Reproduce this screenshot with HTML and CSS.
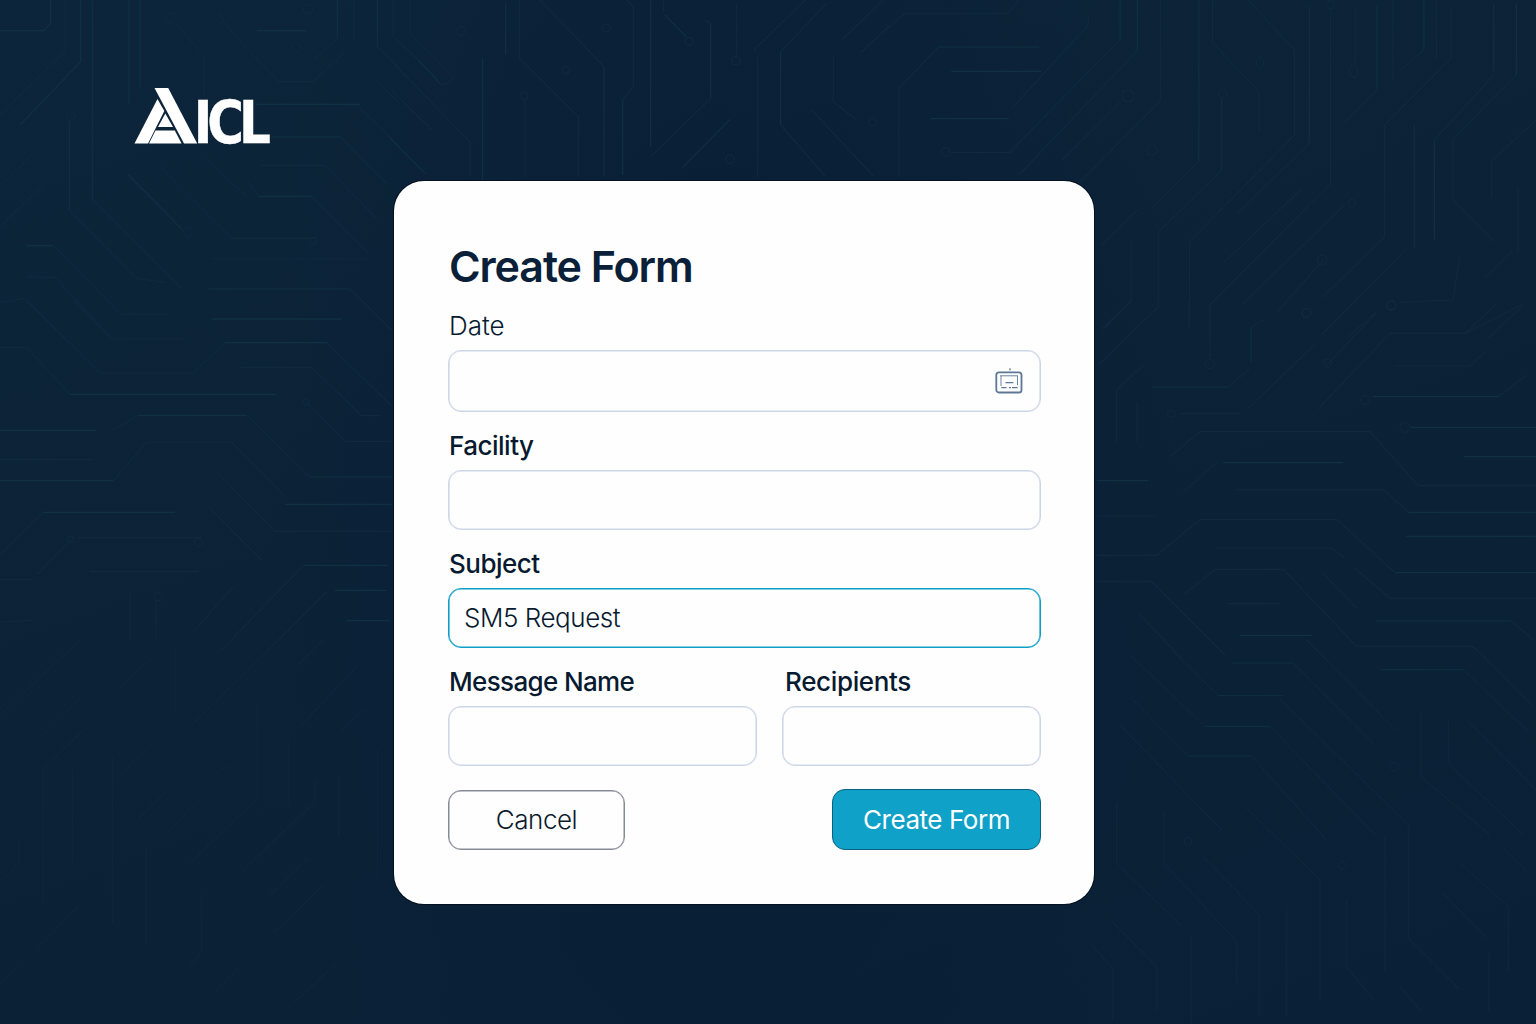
FILE: index.html
```html
<!DOCTYPE html>
<html lang="en">
<head>
<meta charset="utf-8">
<title>Create Form</title>
<link rel="stylesheet" href="styles.css">
</head>
<body>
<svg class="circuit" viewBox="0 0 1536 1024" aria-hidden="true">
  <g transform="scale(.33333)">
    <path class="teal" d="M0 92H132L152 70V0M242 0V185L60 375M277 0V598M387 0V310M420 0V262M208 362V630M770 92H920M1012 0V115M1132 0V140M770 313H1080M815 411H1022M385 525L550 692M775 589H935M80 737H160M625 867H1050M635 957H1025"/>
    <path d="M196 0V152L0 345M10 550L102 458M0 680L135 550M208 630L410 835L495 847M277 598L550 870M525 65L612 170V290M655 40L690 90L835 245H940L1035 155M940 180L1012 115M1062 0V120M1132 140L1200 205M1180 0V110M1080 325L1200 440M1022 411L1160 550M780 497H975L1130 655M480 500L695 715H950M610 470L740 590M740 540L775 589M935 589L1105 760M635 777H1105M160 737L362 942H500M80 830L165 832L330 1010M0 908L70 895L200 1020M1050 867L1175 990M1120 235L1200 310"/>
    <circle cx="212" cy="348" r="13"/><circle cx="564" cy="696" r="13"/><circle cx="924" cy="26" r="14"/><circle cx="890" cy="142" r="13"/><circle cx="940" cy="722" r="11"/><circle cx="510" cy="54" r="14"/>
  </g>
  <g transform="translate(390 0) scale(.33333)">
    <path class="teal" d="M347 10V165M278 175V540M642 200V530M698 300V525M782 0V440M962 70V295M1172 155V375M825 45L888 110M875 505L1020 358M0 415L105 520M85 180L150 250"/>
    <path d="M10 0V110L85 180M60 0V100L185 225Q195 250 150 255M0 180L240 425V530M0 265L125 390M388 0V175L565 350V530M405 298V530M450 0L642 200M710 0L730 22V260L698 300M820 0V40M945 62L962 70M962 295L782 470M1040 10V165M1245 0L1090 152M1310 10L1172 155M1103 170V530M1172 375L1305 528M1480 0L1355 120M1500 75L1410 160M1330 165V305L1400 360M1265 330L1450 528"/>
    <circle cx="403" cy="287" r="11"/><circle cx="528" cy="210" r="11"/><circle cx="898" cy="124" r="12"/><circle cx="1038" cy="182" r="13"/><circle cx="212" cy="94" r="14"/><circle cx="648" cy="84" r="12"/><circle cx="1020" cy="478" r="13"/><circle cx="1448" cy="366" r="12"/>
  </g>
  <g transform="translate(880 0) scale(.41837 .33333)">
    <path class="teal" d="M140 141H380M170 214H385M120 356H308M574 0V118M615 0V152M762 0V485M1026 20V430M1188 15V270M1300 0V150M1521 10V225M1277 375V745M1325 420V720M1467 10V215M817 295V510"/>
    <path d="M60 40H305L332 0M0 105L60 40M140 141L45 265V530M498 48V75L315 325M574 118L310 457H170M615 152L332 525M670 0V303L435 600M575 305L435 480M762 485L650 625M817 510L665 697V922L590 1010M795 0V128L906 275V400M880 0L991 150V405L740 725V985M1026 430L855 640M1077 30V550L788 915V1020M1136 20V195M1188 270L1110 368M1226 0V245M1300 150L1240 215M1330 0V180M1365 20V175L1206 375V710L1055 895M1467 225L1325 420M1521 225L1370 415V600L1470 727M1568 360L1462 483V595M1525 560V760M1110 615L865 915M1060 780L950 935M1005 570L820 790M1260 745L1055 1005M1385 770L1370 900L1240 907M1510 755L1445 835M600 720V905L530 985M615 630L530 735M1187 935L1120 1010M1400 1000H1220M1540 910L1400 1000"/>
    <ellipse cx="157" cy="455" rx="10" ry="13"/><ellipse cx="593" cy="288" rx="14" ry="18"/><ellipse cx="819" cy="281" rx="10" ry="12"/><ellipse cx="908" cy="188" rx="9" ry="15"/><ellipse cx="1132" cy="214" rx="10" ry="18"/><ellipse cx="650" cy="450" rx="12" ry="15"/><ellipse cx="1077" cy="14" rx="9" ry="12"/><ellipse cx="1128" cy="610" rx="9" ry="12"/><ellipse cx="1222" cy="915" rx="11" ry="13"/><ellipse cx="1057" cy="780" rx="11" ry="15"/><ellipse cx="1018" cy="940" rx="11" ry="14"/>
  </g>
  <g transform="translate(1090 300) scale(.33333)">
    <path class="teal" d="M187 261H415M483 85V185M848 290H1225M962 382H1338M400 488H760M955 637H1338M950 709H1338M915 818H1338M20 542H175M450 1006H665M860 963H1265M1122 470H1338"/>
    <path d="M125 0L40 88M205 20L25 195M360 10V180M297 0V82M160 195L80 270V425M141 305V425M415 261L480 205M480 85L520 60M270 341H450M240 470L330 395H840L985 557H1338M800 0L695 105M860 38L705 200M675 132L472 328M1220 10L1125 100H900L683 328M1300 15L1190 118M915 198H1140L1185 155M1225 290L1310 225M280 575L380 488M440 569H880L955 637M20 648H195M20 766H200L330 659H740L915 818M380 744H725L765 775M795 805L900 895H1338M280 885L375 808H580L800 1039H1145L1190 1075M20 845H185L405 1065M415 911H570M150 945L275 1075M700 820L800 925M650 1020L710 1080M1265 963L1330 1020"/>
    <circle cx="359" cy="191" r="14"/><circle cx="904" cy="18" r="14"/><circle cx="945" cy="382" r="15"/><circle cx="825" cy="300" r="14"/><circle cx="713" cy="190" r="12"/><circle cx="244" cy="341" r="11"/><circle cx="650" cy="38" r="13"/>
  </g>
  <g class="faint" transform="translate(1090 650) scale(.33333)">
    <path class="teal" d="M425 39H610M385 137H580M345 229H540M295 318H485M870 59H1120"/>
    <path d="M245 0L385 137M610 39L850 280M680 0L918 242M570 147L955 525V865L1105 1015M120 15L345 229M540 229L855 555M120 140L295 318M485 318L710 570M470 475L690 690V1050M90 225L395 540M885 555V965M1170 10L1330 170M1120 59L1320 250M1125 205L1338 420M993 180V380L1200 555M1075 210V340L1300 555M1240 595L1310 665M222 480V640L440 875V1000M80 455V640L275 828M340 620L508 795V1100M62 810L200 950V1080M0 880L68 955V1110M304 860V1120M590 765V1100M770 750V950L850 1050M1060 730L1190 865M1110 640L1255 770V960M1197 910V1090M930 1010L990 1080"/>
    <circle cx="294" cy="574" r="11"/><circle cx="757" cy="646" r="11"/><circle cx="913" cy="350" r="13"/>
  </g>
  <g transform="translate(0 300) scale(.33333)">
    <path class="teal" d="M635 57H1025M675 128H980M210 283H830M0 391H290M0 542H340M130 637H525M930 531H1175M855 613H1175M910 796H1165M1005 871H1160M1040 962H1170M415 346H740"/>
    <path d="M365 42H510M220 0L335 117H560M80 0L300 219H580L675 128M0 143H80L210 283M720 202H935L1085 347H1140M980 128L1175 318M920 305L1035 424H1175M340 391L415 346M740 346L930 531M0 479H280M340 542L440 426H695L855 590M645 510L825 694H1175M130 637L0 765M230 713H605M220 713L110 825M0 839H95M270 814H595M625 620L785 780M910 796L665 1050M980 875L805 1050M700 860L580 995M0 966L95 961M390 875V1020M468 900V1020"/>
    <circle cx="919" cy="306" r="10"/><circle cx="212" cy="719" r="10"/><circle cx="475" cy="890" r="12"/><circle cx="595" cy="727" r="12"/>
  </g>
  <g class="faint" transform="translate(0 640) scale(.33333)">
    <path d="M240 0L0 225M695 0L620 65M835 0L570 260M970 0L890 80M1070 80L905 255M1090 210L1020 275M526 20V220M240 175L120 295M250 270L130 385V785M217 390V670M337 350V850M438 620V915M470 40L350 150M455 310L360 405M690 375L640 405M605 470L505 575M500 455L415 535M772 190V475L570 670M865 305V490M945 420V485L725 695M1016 405V590M1133 330V730M925 655L805 770M970 735L820 880M55 590V670L0 730M235 800L105 930M0 1035L60 970M605 760V935L570 980M715 985L640 1060M1010 970L880 1090"/>
  </g>
</svg>
<main class="page">
  <header class="brand">
    <svg class="logo" viewBox="0 0 138 58" role="img" aria-label="AICL">
      <path d="M20.5 1H34.2L63.2 56.5H50Z"/>
      <path d="M23.5 12L30.3 24L14 56.5H.5Z"/>
      <path d="M31.3 26.5L39 40H24Z"/>
      <path d="M21.5 43.5H40.8L47.6 56.5H15Z"/>
      <text class="wordmark" transform="translate(0 56.2) scale(.82 .97)" x="72.8 89.4 128.2">ICL</text>
    </svg>
  </header>
  <form class="card">
    <h1 class="title">Create Form</h1>
    <div class="field date">
      <label class="label light" for="date">Date</label>
      <div class="input" id="date">
        <svg class="calendar" viewBox="0 0 28 28" aria-hidden="true">
          <rect x="1.3" y="5.3" width="25.2" height="20.2" rx="2.6"/>
          <path class="thin" d="M5 8.8H23M6 9V19M22.5 9V18"/>
          <path class="dash" d="M10.5 15.6H18.3M6.3 20.6H11.5M14 20.6H16M17 20.6H22.5M15 1.3V3.3"/>
        </svg>
      </div>
    </div>
    <div class="field facility">
      <label class="label" for="facility">Facility</label>
      <div class="input" id="facility"></div>
    </div>
    <div class="field subject">
      <label class="label" for="subject">Subject</label>
      <div class="input active" id="subject"><span class="value">SM5 Request</span></div>
    </div>
    <div class="pair">
      <div class="field message">
        <label class="label" for="message">Message Name</label>
        <div class="input" id="message"></div>
      </div>
      <div class="field recipients">
        <label class="label" for="recipients">Recipients</label>
        <div class="input" id="recipients"></div>
      </div>
    </div>
    <div class="actions">
      <button class="button cancel" type="button"><span>Cancel</span></button>
      <button class="button create" type="button"><span>Create Form</span></button>
    </div>
  </form>
</main>
</body>
</html>
```

FILE: styles.css
```css
* { box-sizing: border-box; }

body {
  margin: 0;
  width: 1536px;
  height: 1024px;
  overflow: hidden;
  position: relative;
  font-family: Inter, "Liberation Sans", sans-serif;
  color: #071a30;
  background:
    radial-gradient(ellipse 460px 1000px at 720px 500px, #081e36 0%, #081e3600 100%),
    linear-gradient(160deg, #0d253a 0%, #0b2237 45%, #0a2036 100%);
}

.circuit {
  position: absolute;
  inset: 0;
  width: 1536px;
  height: 1024px;
  fill: none;
  stroke: #11293f;
  stroke-width: 1.2;
}
.circuit path, .circuit circle, .circuit ellipse { vector-effect: non-scaling-stroke; }
.circuit .teal { stroke: #103043; }
.circuit .faint { stroke: #0f273c; }
.circuit .faint .teal { stroke: #0f2d40; }

.page {
  position: relative;
  display: flex;
  flex-direction: column;
  height: 1024px;
}

.brand { height: 181px; padding: 87px 0 0 134px; }
.logo { display: block; width: 138px; height: 58px; fill: #fff; overflow: visible; }
.wordmark {
  font: 700 61px "DejaVu Sans", sans-serif;
  stroke: #fff;
  stroke-width: .5;
}

.card {
  width: 700px;
  height: 723px;
  margin-left: 394px;
  padding: 60px 53px 0 54px;
  border-radius: 30px;
  background: #fefefe;
  box-shadow: 0 0 0 1px #03101f;
}

.title {
  margin: 0;
  height: 50px;
  padding-left: 1px;
  line-height: 50px;
  font-size: 43px;
  font-weight: 600;
  letter-spacing: -1.1px;
  white-space: nowrap;
  color: #0a2038;
}

.field { display: flex; flex-direction: column; gap: 9px; }
.date { margin-top: 20px; }
.facility { margin-top: 19px; }
.subject { margin-top: 19px; }

.label {
  height: 30px;
  padding-left: 1px;
  line-height: 30px;
  font-size: 26px;
  font-weight: 500;
  letter-spacing: -.5px;
  white-space: nowrap;
}
.label.light { font-weight: 350; letter-spacing: 0; }
.message .label { letter-spacing: -.65px; }
.recipients .label { padding-left: 3px; letter-spacing: -.35px; }

.input {
  display: flex;
  align-items: center;
  height: 60px;
  padding: 0 16px;
  border: 1px solid #cdd5e7;
  border-radius: 13px;
  box-shadow: inset 0 0 0 .6px #cdd5e7;
}
.date .input { height: 62px; padding: 0 17px 1px; justify-content: flex-end; }
.input.active {
  padding: 0 15px 2px;
  border-color: #0b9fca;
  box-shadow: inset 0 0 0 .6px #0b9fca;
}
.value { font-size: 26px; font-weight: 300; letter-spacing: -.45px; }

.calendar {
  width: 28px;
  height: 28px;
  fill: none;
  stroke: #5c7896;
  stroke-width: 1.8;
}
.calendar .thin { stroke-width: .9; }
.calendar .dash { stroke-width: 1.3; }

.pair {
  display: grid;
  grid-template-columns: 309px 259px;
  justify-content: space-between;
  margin-top: 19px;
}

.actions {
  display: flex;
  justify-content: space-between;
  margin-top: 23px;
}
.button {
  height: 61px;
  padding: 0;
  border-radius: 13px;
  font: 400 26px/30px Inter, sans-serif;
  letter-spacing: -.45px;
}
.cancel {
  width: 177px;
  height: 60px;
  margin-top: 1px;
  border: 1px solid #858b94;
  box-shadow: inset 0 0 0 .5px #858b94;
  background: #fefefe;
  color: #0b1a2c;
  font-weight: 350;
}
.create {
  width: 209px;
  border: 1px solid #0b6184;
  background: #10a1c8;
  color: #fff;
}
```
